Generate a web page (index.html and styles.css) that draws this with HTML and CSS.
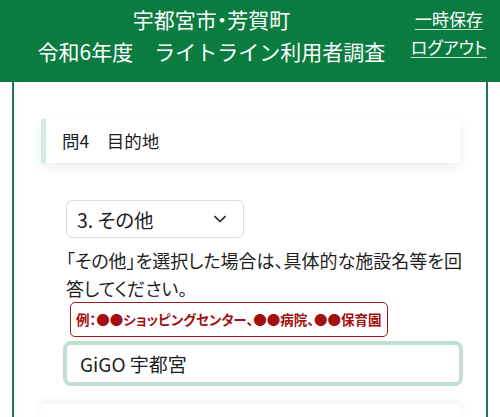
FILE: index.html
```html
<!DOCTYPE html>
<html lang="ja">
<head>
<meta charset="utf-8">
<link rel="stylesheet" href="styles.css">
</head>
<body>
<header class="top">
  <div class="title">
    <div class="t1">宇都宮市<span class="dot">・</span>芳賀町</div>
    <div class="t2">令和6年度　ライトライン利用者調査</div>
  </div>
  <nav class="links">
    <a href="#">一時保存</a>
    <a href="#">ログアウト</a>
  </nav>
</header>
<main class="card">
  <div class="qhead">問4　目的地</div>
  <div class="qbody">
    <div class="select">
      <span>3. その他</span>
      <svg class="chev" width="14" height="8" viewBox="0 0 14 8"><path d="M1.5 1.2 L7 6.5 L12.5 1.2" fill="none" stroke="#222" stroke-width="1.6"/></svg>
    </div>
    <p class="desc">「その他」を選択した場合は、具体的な施設名等を回答してください。</p>
    <div class="example">例：●●ショッピングセンター、●●病院、●●保育園</div>
    <div class="input">GiGO 宇都宮</div>
  </div>
  <div class="next"></div>
</main>
</body>
</html>
```
FILE: styles.css
```css
html, body {
  margin: 0;
  padding: 0;
  background: #fff;
  font-family: "Noto Sans CJK JP", "Noto Sans", sans-serif;
  color: #1e1e1e;
  overflow: hidden;
}
.top {
  background: #0b7c3f;
  color: #fff;
  height: 82px;
  display: flex;
  align-items: flex-start;
  box-sizing: border-box;
  padding-top: 3px;
}
.title {
  flex: 1;
  text-align: center;
  font-size: 21px;
  line-height: 32px;
  padding-left: 12px;
}
.dot {
  font-feature-settings: "palt";
}
.links {
  display: flex;
  flex-direction: column;
  align-items: center;
  padding-right: 13px;
  padding-top: 4px;
  gap: 4px;
}
.links a {
  color: #fff;
  font-size: 17px;
  line-height: 24px;
  text-decoration: underline;
  text-decoration-color: rgba(255,255,255,0.75);
  text-underline-offset: 3px;
  text-decoration-thickness: 1px;
  font-feature-settings: "palt";
}
.card {
  margin: 0 12px;
  border-left: 2px solid #1f7a4b;
  border-right: 2px solid #1f7a4b;
  padding: 37px 26px 0 27px;
}
.qhead {
  background: #fff;
  border-left: 5px solid #d0eedb;
  height: 44px;
  box-sizing: border-box;
  padding-left: 16px;
  font-size: 17.5px;
  line-height: 44px;
  box-shadow: 0 4px 10px rgba(0,0,0,0.08);
}
.qbody {
  padding: 37px 0 0 25px;
}
.select {
  width: 178px;
  height: 38px;
  box-sizing: border-box;
  border: 1px solid #dcdcdc;
  border-radius: 6px;
  display: flex;
  align-items: center;
  justify-content: space-between;
  padding: 0 16px 0 10px;
  font-size: 19.5px;
  font-feature-settings: "palt";
}
.chev { display: block; }
.desc {
  margin: 8px -8px 0 0;
  font-size: 18px;
  line-height: 28px;
  font-feature-settings: "palt";
}
.example {
  display: inline-block;
  vertical-align: top;
  margin-left: 4px;
  border: 1px solid #9b1c1c;
  border-radius: 5px;
  color: #a40f0f;
  font-weight: bold;
  font-size: 13.5px;
  line-height: 33px;
  padding: 0 5px;
  font-feature-settings: "palt";
}
.input {
  margin: 4px 0 0 -3px;
  width: 400px;
  height: 45px;
  box-sizing: border-box;
  border: 4px solid #bfe0cf;
  border-radius: 8px;
  font-size: 19px;
  line-height: 37px;
  padding-left: 13px;
  font-feature-settings: "palt";
}
.next {
  margin-top: 18px;
  height: 16px;
  box-shadow: 0 -4px 10px rgba(0,0,0,0.05);
}
```
